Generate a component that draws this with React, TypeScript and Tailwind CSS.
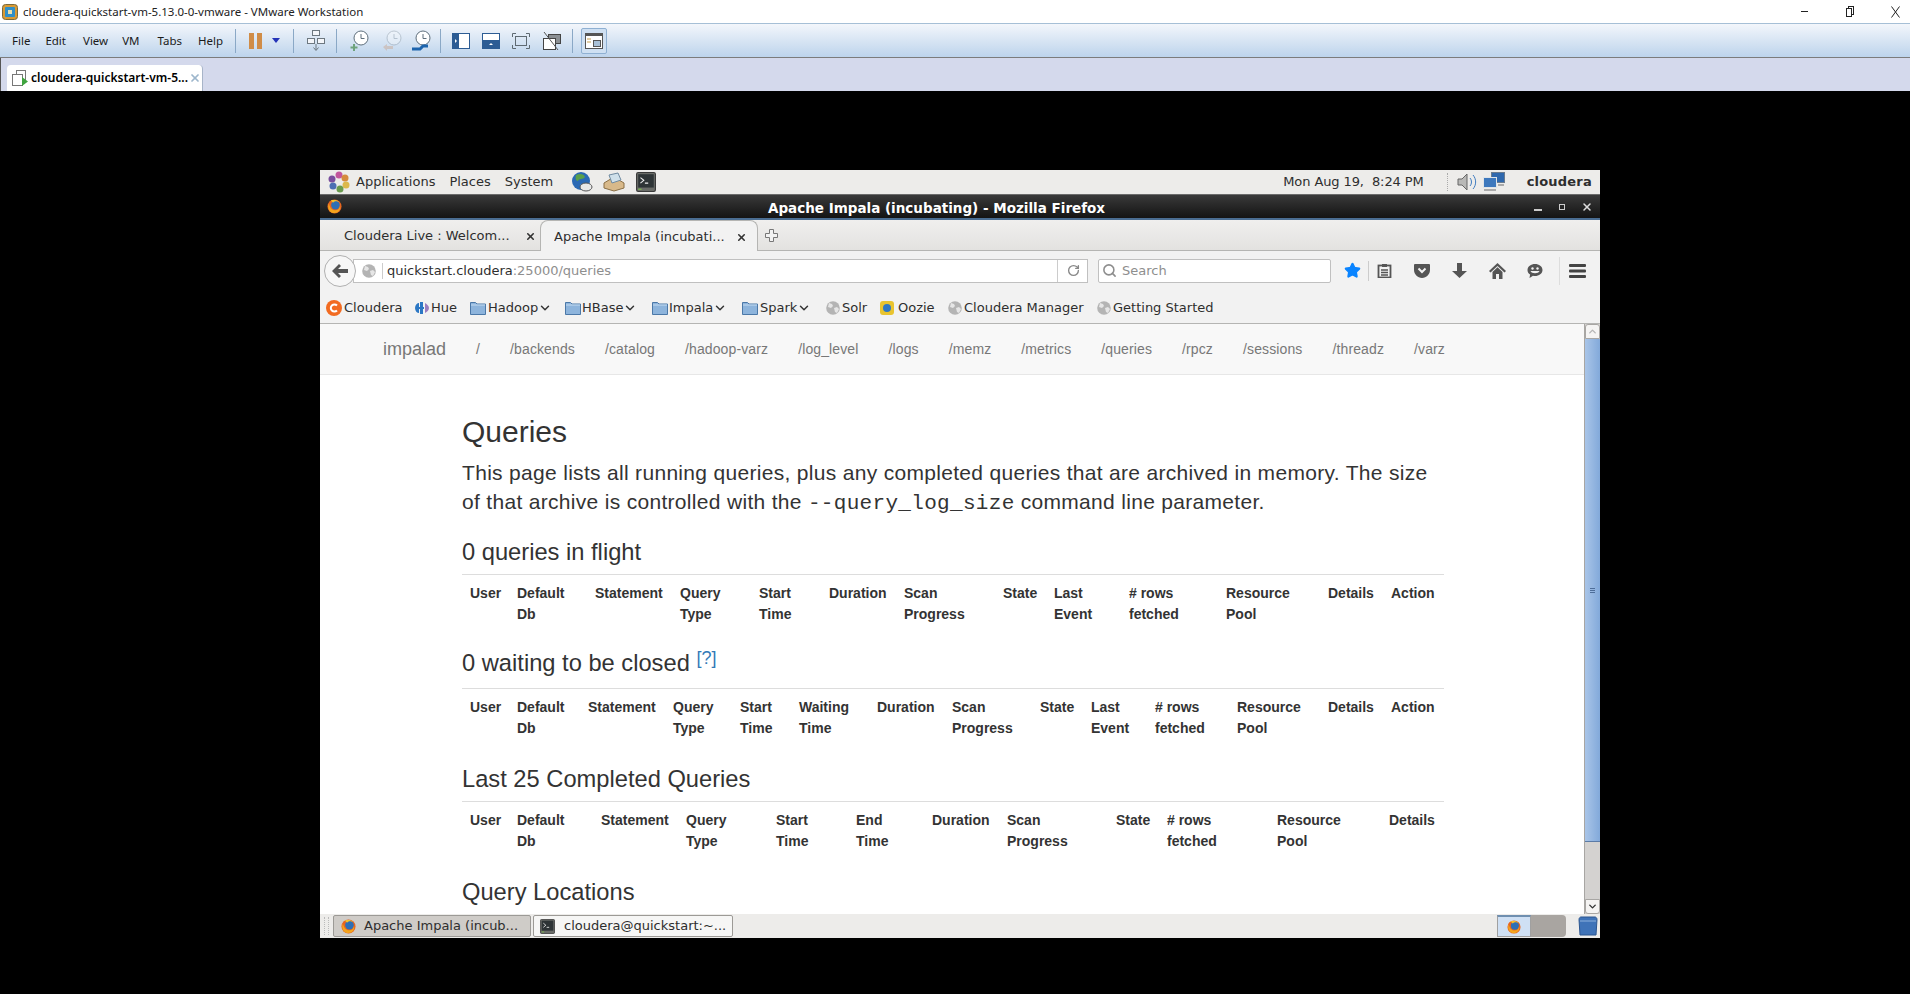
import React from 'react';
import { ChevronDown, ChevronUp, Search, RotateCw, X, Star } from 'lucide-react';

const Firefox = ({ size = 16 }: { size?: number }) => (
  <svg width={size} height={size} viewBox="0 0 16 16">
    <circle cx="8" cy="8" r="7.5" fill="#e8651f" />
    <circle cx="9" cy="6.5" r="4.6" fill="#2f6fb5" />
    <path d="M2 5c1 4 3 7 7 7 3 0 4.500-2 4.800-4.500C15 11 12 15 8 15 3.500 15 .5 11 1.500 6z" fill="#f3a51d" />
    <path d="M4 1.500C7 .5 11 1 13 3 10.500 2 8 2.300 6.500 4z" fill="#f6c02c" />
  </svg>
);

const Globe = () => (
  <svg width="16" height="16" viewBox="0 0 16 16" className="shrink-0">
    <circle cx="8" cy="8" r="6.800" fill="#b4b4b4" />
    <path d="M4 3l3 1 1 2-2 2-3-1zM9 8l3-1 2 2-2 4-2-1z" fill="#e6e6e6" />
  </svg>
);

const Folder = () => (
  <svg width="16" height="16" viewBox="0 0 16 16" className="shrink-0">
    <path d="M.5 2.500h5l1.500 1.500h8.500v10.500H.5z" fill="#8db4dc" stroke="#4b78a8" />
    <path d="M1 5h14" stroke="#c5dbf0" />
  </svg>
);

const Terminal = ({ size = 18 }: { size?: number }) => (
  <svg width={size} height={size} viewBox="0 0 18 18">
    <rect x=".5" y=".5" width="17" height="17" rx="1.500" fill="#6a6c68" stroke="#3a3a3a" />
    <rect x="2" y="2" width="14" height="12" fill="#2e3436" />
    <path d="M4 5l3 2.500L4 10M8 10h3" stroke="#eee" fill="none" />
    <path d="M2 15.500h3" stroke="#7ec34c" />
  </svg>
);

const Sep = ({ cls }: { cls: string }) => <div className={`w-px h-[24px] bg-[#8aa8c6] shrink-0 ${cls}`} />;

const ClockIcon = ({ badge, dim }: { badge: string; dim?: boolean }) => (
  <svg width="20" height="22" viewBox="0 0 20 22" className={`shrink-0 ${dim ? 'opacity-30' : ''}`}>
    <circle cx="12" cy="8" r="7" fill="#fff" stroke="#5f6f7c" />
    <path d="M12 4v4.500h3.500" stroke="#5f6f7c" fill="none" />
    {badge === 'plus' && <path d="M5 14v7M1.500 17.500h7" stroke="#6fa37c" strokeWidth="2" />}
    {badge === 'back' && <path d="M1 17l4-3v2h6v3H5v2z" fill="#c98a5e" />}
    {badge === 'wrench' && <path d="M1 19h8l3-3h5" stroke="#1d64ad" strokeWidth="3" fill="none" />}
  </svg>
);

const VmwareToolbar = () => (
  <div className="h-[35px] flex items-center text-[11.500px] text-[#1b1b1b] border-t border-[#a6bfd6] border-b border-b-[#7c7c7c] bg-gradient-to-b from-[#f3f6fb] to-[#bdd4ec]">
    <span className="ml-[12px]">File</span>
    <span className="ml-[15px]">Edit</span>
    <span className="ml-[17px]">View</span>
    <span className="ml-[14px]">VM</span>
    <span className="ml-[18px]">Tabs</span>
    <span className="ml-[16px]">Help</span>
    <Sep cls="ml-[12px]" />
    <div className="ml-[13px] w-[5px] h-[16px] bg-[#d08c47] shrink-0" />
    <div className="ml-[3px] w-[5px] h-[16px] bg-[#d08c47] shrink-0" />
    <svg width="8" height="5" viewBox="0 0 8 5" className="ml-[10px] shrink-0"><path d="M0 0h8L4 5z" fill="#2433b8" /></svg>
    <Sep cls="ml-[13px]" />
    <svg width="18" height="22" viewBox="0 0 18 22" className="ml-[13px] shrink-0">
      <g fill="#f4f6fa" stroke="#6d7880">
        <rect x="5.500" y=".5" width="7" height="5" />
        <rect x=".5" y="8.500" width="7" height="5" />
        <rect x="10.500" y="8.500" width="7" height="5" />
      </g>
      <path d="M9 14v6M6.500 17.500L9 20.500l2.500-3" stroke="#6d7880" fill="none" />
    </svg>
    <Sep cls="ml-[11px]" />
    <div className="ml-[12px]"><ClockIcon badge="plus" /></div>
    <div className="ml-[13px]"><ClockIcon badge="back" dim /></div>
    <div className="ml-[9px]"><ClockIcon badge="wrench" /></div>
    <Sep cls="ml-[9px]" />
    <svg width="18" height="16" viewBox="0 0 18 16" className="ml-[11px] shrink-0">
      <rect x=".5" y=".5" width="17" height="15" fill="#fff" stroke="#2c5c94" />
      <rect x="0" y="0" width="7" height="16" fill="#2c5c94" />
      <path d="M3 6l2 2-2 2z" fill="#fff" />
    </svg>
    <svg width="18" height="16" viewBox="0 0 18 16" className="ml-[12px] shrink-0">
      <rect x=".5" y=".5" width="17" height="15" fill="#fff" stroke="#2c5c94" />
      <rect x="0" y="7" width="18" height="9" fill="#2c5c94" />
      <path d="M7 12l2-2 2 2z" fill="#fff" />
    </svg>
    <svg width="18" height="16" viewBox="0 0 18 16" className="ml-[12px] shrink-0" fill="none" stroke="#5f6a72">
      <rect x="3.500" y="3.500" width="11" height="9" />
      <path d="M.5 4V.5H4M14 .5h3.500V4M.5 12v3.500H4M14 15.500h3.500V12" />
    </svg>
    <svg width="18" height="18" viewBox="0 0 18 18" className="ml-[13px] shrink-0">
      <rect x="5.500" y="2.500" width="12" height="9" fill="#8b8f93" stroke="#444" />
      <rect x=".5" y="6.500" width="12" height="11" fill="#fff" stroke="#444" />
      <path d="M1 0l14 18" stroke="#555" />
    </svg>
    <Sep cls="ml-[11px]" />
    <div className="ml-[8px] w-[26px] h-[26px] rounded-[2px] border border-[#8fb0d2] bg-[#cfe0f2] flex items-center justify-center shrink-0">
      <svg width="18" height="16" viewBox="0 0 18 16">
        <rect x=".5" y=".5" width="17" height="15" fill="#fff" stroke="#555" />
        <rect x="0" y="0" width="18" height="3" fill="#555" />
        <rect x="8.500" y="7.500" width="7" height="6" fill="#a9c0d6" stroke="#555" />
        <path d="M2 6h4M2 9h4" stroke="#c9a04e" />
      </svg>
    </div>
  </div>
);

const GnomePanel = () => (
  <div className="h-[25px] bg-[#edecea] flex items-center text-[13px] text-[#2e2e2e] border-b border-[#6b6b6b] font-['DejaVu_Sans',sans-serif]">
    <svg width="22" height="22" viewBox="0 0 22 22" className="ml-[8px] shrink-0">
      <circle cx="11" cy="4" r="3.500" fill="#c2569d" />
      <circle cx="17" cy="7" r="3.500" fill="#d58a3e" />
      <circle cx="18" cy="14" r="3.500" fill="#dcb84b" />
      <circle cx="12" cy="18" r="3.500" fill="#6a9b4e" />
      <circle cx="5" cy="15" r="3.500" fill="#4d6fb3" />
      <circle cx="4" cy="8" r="3.500" fill="#7a4f9e" />
      <circle cx="11" cy="11" r="2.500" fill="#edecea" />
    </svg>
    <span className="ml-[6px]">Applications</span>
    <span className="ml-[14px]">Places</span>
    <span className="ml-[14px]">System</span>
    <svg width="22" height="22" viewBox="0 0 22 22" className="ml-[18px] shrink-0">
      <circle cx="10" cy="10" r="9" fill="#2a69b4" />
      <path d="M5 4c4-2 8-1 9 2-2 3-6 1-7 4-2 0-3-3-2-6z" fill="#5aa04a" />
      <ellipse cx="15" cy="16" rx="6" ry="4" fill="#e8e8e8" stroke="#555" />
    </svg>
    <svg width="22" height="20" viewBox="0 0 22 20" className="ml-[10px] shrink-0">
      <path d="M1 11l10-6 10 6v5L11 19 1 16z" fill="#d8b98a" stroke="#8a6f45" />
      <path d="M6 3l9-2 3 7-9 3z" fill="#cfe0ea" stroke="#6f8aa0" />
    </svg>
    <div className="ml-[11px]"><Terminal size={20} /></div>
    <span className="ml-[627px] tracking-[-0.1px]">Mon Aug 19,&nbsp; 8:24 PM</span>
    <div className="ml-[23px] w-[3px] h-[18px] border-l border-dotted border-[#aaa] shrink-0" />
    <svg width="20" height="20" viewBox="0 0 20 20" className="ml-[7px] shrink-0">
      <path d="M1 7h4l5-5v16l-5-5H1z" fill="#b9b9b7" stroke="#666" />
      <path d="M13 6c2 2 2 6 0 8M16 3c3.500 4 3.500 10 0 14" stroke="#3f7cc0" fill="none" />
    </svg>
    <svg width="22" height="22" viewBox="0 0 22 22" className="ml-[6px] shrink-0">
      <rect x="8.500" y="1.500" width="13" height="10" fill="#2f68ad" stroke="#6b7c8f" />
      <rect x=".5" y="6.500" width="13" height="10" fill="#3d78bd" stroke="#dfe4e8" />
      <path d="M1 19h12" stroke="#aaa" strokeWidth="2" />
      <path d="M15 14h6" stroke="#aaa" strokeWidth="2" />
    </svg>
    <span className="ml-[22px] font-bold tracking-[0.2px]">cloudera</span>
  </div>
);

const FirefoxTitleBar = () => (
  <div className="h-[25px] bg-gradient-to-b from-[#3a3a3a] to-[#141414] border-b-2 border-[#4a6d92] flex items-center text-white font-['DejaVu_Sans',sans-serif]">
    <div className="ml-[7px] w-[16px] shrink-0"><Firefox size={15} /></div>
    <div className="flex-1 text-center text-[13.500px] font-bold pr-[4px] pt-[3px]">Apache Impala (incubating) - Mozilla Firefox</div>
    <div className="w-[8px] h-[2px] bg-[#ccc] mt-[7px] shrink-0" />
    <div className="ml-[17px] w-[6px] h-[6px] border border-[#ccc] shrink-0" />
    <X size={12} strokeWidth={3} className="ml-[16px] mr-[7px] text-[#ddd] shrink-0" />
  </div>
);

const FirefoxTabs = () => (
  <div className="h-[31px] flex items-end bg-gradient-to-b from-[#f0efee] to-[#e3e2e0] border-b border-[#b5b5b3] text-[13px] text-[#2e2e2e] font-['DejaVu_Sans',sans-serif]">
    <div className="w-[220px] h-[30px] flex items-center shrink-0 pt-[2px]">
      <span className="ml-[24px] w-[174px] truncate">Cloudera Live : Welcom...</span>
      <X size={11} strokeWidth={3.500} className="ml-[7px] text-[#333]" />
    </div>
    <div className="w-[218px] h-[31px] mb-[-1px] flex items-center bg-[#f2f2f2] border border-b-0 border-[#b5b5b3] rounded-t-[8px] shrink-0 pt-[2px]">
      <span className="ml-[13px] w-[174px] truncate">Apache Impala (incubati...</span>
      <X size={11} strokeWidth={3.500} className="ml-[8px] text-[#333]" />
    </div>
    <div className="h-[30px] flex items-center ml-[6px] pt-[1px]">
      <svg width="15" height="15" viewBox="0 0 15 15">
        <path d="M5.500 1.500h4v4h4v4h-4v4h-4v-4h-4v-4h4z" fill="#f2f2f2" stroke="#777" />
      </svg>
    </div>
  </div>
);

const FirefoxNavBar = () => (
  <div className="h-[41px] bg-[#f2f2f2] flex items-center pb-[2px] font-['DejaVu_Sans',sans-serif]">
    <div className="ml-[4px] w-[32px] h-[32px] rounded-full border border-[#b0b0b0] bg-[#f7f7f7] flex items-center justify-center shrink-0 z-10">
      <svg width="16" height="14" viewBox="0 0 16 14"><path d="M7 0l2 2-3 3h10v4H6l3 3-2 2-7-7z" fill="#555" /></svg>
    </div>
    <div className="ml-[-3px] w-[735px] h-[24px] bg-white border border-[#c0c0c0] flex items-center text-[13px] shrink-0">
      <div className="ml-[7px]"><Globe /></div>
      <div className="w-px h-[16px] bg-[#ccc] ml-[5px]" />
      <span className="ml-[4px] text-[#2e2e2e]">quickstart.cloudera</span>
      <span className="text-[#8e8e8e]">:25000/queries</span>
      <div className="flex-1" />
      <div className="w-px h-[22px] bg-[#ccc]" />
      <RotateCw size={13} strokeWidth={2.500} className="ml-[9px] mr-[7px] text-[#888]" />
    </div>
    <div className="ml-[10px] w-[233px] h-[24px] bg-white border border-[#c0c0c0] rounded-[2px] flex items-center text-[13px] text-[#8e8e8e] shrink-0">
      <Search size={15} strokeWidth={2.500} className="ml-[3px]" />
      <span className="ml-[5px]">Search</span>
    </div>
    <Star size={17} fill="#0a84ff" stroke="#0a84ff" className="ml-[13px] shrink-0" />
    <div className="w-px h-[20px] bg-[#ccc] ml-[7px] shrink-0" />
    <svg width="15" height="15" viewBox="0 0 15 15" className="ml-[8px] shrink-0">
      <rect x="1.500" y="2.500" width="12" height="12" fill="none" stroke="#555" strokeWidth="1.800" />
      <path d="M5 1h5v3H5z" fill="#555" />
      <path d="M4 7h7M4 9.500h7M4 12h7" stroke="#555" strokeWidth="1.300" />
    </svg>
    <svg width="16" height="14" viewBox="0 0 16 14" className="ml-[22px] shrink-0">
      <path d="M1 0h14a1 1 0 0 1 1 1v5c0 4-3.500 8-8 8S0 10 0 6V1a1 1 0 0 1 1-1z" fill="#555" />
      <path d="M4.500 4.500L8 8l3.500-3.500" stroke="#f2f2f2" strokeWidth="2" fill="none" />
    </svg>
    <svg width="15" height="15" viewBox="0 0 15 15" className="ml-[22px] shrink-0"><path d="M5 0h5v8h5l-7.500 7L0 8h5z" fill="#555" /></svg>
    <svg width="17" height="16" viewBox="0 0 17 16" className="ml-[22px] shrink-0">
      <path d="M8.500 0L17 8l-1.500 1.500-7-6.500-7 6.500L0 8z" fill="#555" />
      <path d="M3.500 9l5-4.700 5 4.700v7H10v-5H7v5H3.500z" fill="#555" />
    </svg>
    <svg width="16" height="16" viewBox="0 0 16 16" className="ml-[21px] shrink-0">
      <path d="M8 1c4 0 7.500 2.500 7.500 6S12 13 8 13c-.8 0-1.500 0-2-.2L2.500 15l.6-3.500C1.500 10.500.5 9 .5 7 .5 3.500 4 1 8 1z" fill="#555" />
      <circle cx="5.500" cy="5.500" r="1.200" fill="#f2f2f2" />
      <circle cx="10.500" cy="5.500" r="1.200" fill="#f2f2f2" />
      <path d="M3.500 8h9c-1 3-8 3-9 0z" fill="#f2f2f2" />
    </svg>
    <div className="w-px h-[28px] bg-[#ddd] ml-[16px] shrink-0" />
    <svg width="17" height="14" viewBox="0 0 17 14" className="ml-[9px] shrink-0">
      <rect width="17" height="3" rx="1" fill="#444" />
      <rect y="5.500" width="17" height="3" rx="1" fill="#444" />
      <rect y="11" width="17" height="3" rx="1" fill="#444" />
    </svg>
  </div>
);

const Chevron = () => <ChevronDown size={14} strokeWidth={2.500} className="shrink-0 text-[#333]" />;

const Bookmarks = () => (
  <div className="h-[32px] bg-[#f2f2f2] border-b border-[#b5b5b3] flex items-center text-[13px] text-[#2e2e2e] font-['DejaVu_Sans',sans-serif] pl-[6px]">
    <div className="w-[88px] flex items-center shrink-0">
      <svg width="16" height="16" viewBox="0 0 16 16" className="shrink-0"><circle cx="8" cy="8" r="8" fill="#f26b21" /><path d="M11 5.500a3.600 3.600 0 1 0 0 5" stroke="#fff" strokeWidth="2" fill="none" /></svg>
      <span className="ml-[2px]">Cloudera</span>
    </div>
    <div className="w-[56px] flex items-center shrink-0">
      <svg width="16" height="16" viewBox="0 0 16 16" className="shrink-0"><path d="M1 8c0-3 2-5 4-5v10c-2 0-4-2-4-5z" fill="#2c77c4" /><rect x="6" y="2" width="3" height="12" fill="#2c77c4" /><path d="M5 7h5v2H5z" fill="#2c77c4" /><path d="M11 3c2 1 4 3 4 5s-2 4-4 5z" fill="#9b7ec0" /></svg>
      <span className="ml-[1px]">Hue</span>
    </div>
    <div className="w-[95px] flex items-center shrink-0"><Folder /><span className="ml-[2px]">Hadoop</span><Chevron /></div>
    <div className="w-[87px] flex items-center shrink-0"><Folder /><span className="ml-[1px]">HBase</span><Chevron /></div>
    <div className="w-[90px] flex items-center shrink-0"><Folder /><span className="ml-[1px]">Impala</span><Chevron /></div>
    <div className="w-[83px] flex items-center shrink-0"><Folder /><span className="ml-[2px]">Spark</span><Chevron /></div>
    <div className="w-[54px] flex items-center shrink-0"><Globe /><span className="ml-[1px]">Solr</span></div>
    <div className="w-[68px] flex items-center shrink-0">
      <svg width="16" height="16" viewBox="0 0 16 16" className="shrink-0"><rect x="1" y="1" width="14" height="14" rx="3" fill="#e9c42f" /><circle cx="8" cy="8" r="4" fill="#2f78c4" /></svg>
      <span className="ml-[3px]">Oozie</span>
    </div>
    <div className="w-[149px] flex items-center shrink-0"><Globe /><span className="ml-[1px]">Cloudera Manager</span></div>
    <div className="flex items-center shrink-0"><Globe /><span className="ml-[1px]">Getting Started</span></div>
  </div>
);

const links = ['/', '/backends', '/catalog', '/hadoop-varz', '/log_level', '/logs', '/memz', '/metrics', '/queries', '/rpcz', '/sessions', '/threadz', '/varz'];

const PageNav = () => (
  <div className="h-[51px] bg-[#f8f8f8] border-b border-[#e7e7e7] flex items-center pl-[48px] text-[#777] shrink-0">
    <span className="px-[15px] text-[18px]">impalad</span>
    {links.map((l) => (
      <span key={l} className="px-[15px] text-[14px] tracking-[0.12px]">{l}</span>
    ))}
  </div>
);

interface Col { top: string; bottom?: string; w: string }

const inFlight: Col[] = [
  { top: 'User', w: 'w-[47px]' },
  { top: 'Default', bottom: 'Db', w: 'w-[78px]' },
  { top: 'Statement', w: 'w-[85px]' },
  { top: 'Query', bottom: 'Type', w: 'w-[79px]' },
  { top: 'Start', bottom: 'Time', w: 'w-[70px]' },
  { top: 'Duration', w: 'w-[75px]' },
  { top: 'Scan', bottom: 'Progress', w: 'w-[99px]' },
  { top: 'State', w: 'w-[51px]' },
  { top: 'Last', bottom: 'Event', w: 'w-[75px]' },
  { top: '# rows', bottom: 'fetched', w: 'w-[97px]' },
  { top: 'Resource', bottom: 'Pool', w: 'w-[102px]' },
  { top: 'Details', w: 'w-[63px]' },
  { top: 'Action', w: 'w-[61px]' },
];

const waiting: Col[] = [
  { top: 'User', w: 'w-[47px]' },
  { top: 'Default', bottom: 'Db', w: 'w-[71px]' },
  { top: 'Statement', w: 'w-[85px]' },
  { top: 'Query', bottom: 'Type', w: 'w-[67px]' },
  { top: 'Start', bottom: 'Time', w: 'w-[59px]' },
  { top: 'Waiting', bottom: 'Time', w: 'w-[78px]' },
  { top: 'Duration', w: 'w-[75px]' },
  { top: 'Scan', bottom: 'Progress', w: 'w-[88px]' },
  { top: 'State', w: 'w-[51px]' },
  { top: 'Last', bottom: 'Event', w: 'w-[64px]' },
  { top: '# rows', bottom: 'fetched', w: 'w-[82px]' },
  { top: 'Resource', bottom: 'Pool', w: 'w-[91px]' },
  { top: 'Details', w: 'w-[63px]' },
  { top: 'Action', w: 'w-[61px]' },
];

const completed: Col[] = [
  { top: 'User', w: 'w-[47px]' },
  { top: 'Default', bottom: 'Db', w: 'w-[84px]' },
  { top: 'Statement', w: 'w-[85px]' },
  { top: 'Query', bottom: 'Type', w: 'w-[90px]' },
  { top: 'Start', bottom: 'Time', w: 'w-[80px]' },
  { top: 'End', bottom: 'Time', w: 'w-[76px]' },
  { top: 'Duration', w: 'w-[75px]' },
  { top: 'Scan', bottom: 'Progress', w: 'w-[109px]' },
  { top: 'State', w: 'w-[51px]' },
  { top: '# rows', bottom: 'fetched', w: 'w-[110px]' },
  { top: 'Resource', bottom: 'Pool', w: 'w-[112px]' },
  { top: 'Details', w: 'w-[63px]' },
];

const HeaderTable = ({ cols }: { cols: Col[] }) => (
  <table className="w-[982px] table-fixed border-collapse">
    <thead>
      <tr className="border-t border-[#ddd]">
        {cols.map((c) => (
          <th key={c.top} className={`${c.w} px-[8px] pt-[8px] pb-[6px] text-left align-top text-[14px] leading-[21px] font-bold`}>
            {c.top}
            {c.bottom && <br />}
            {c.bottom}
          </th>
        ))}
      </tr>
    </thead>
  </table>
);

const Scrollbar = () => (
  <div className="w-[16px] shrink-0 flex flex-col bg-[#d4d2d0] border-l border-[#a8a6a3]">
    <div className="h-[15px] bg-[#f5f4f3] border border-[#a8a6a3] rounded-t-[3px] flex items-center justify-center">
      <ChevronUp size={11} strokeWidth={3} className="text-[#b5b5b5]" />
    </div>
    <div className="h-[503px] bg-gradient-to-r from-[#a9c5e8] to-[#82a9da] border-b border-[#5b7ba6] flex flex-col items-center justify-center gap-[1px]">
      <div className="w-[5px] h-px bg-[#4d6d99]" />
      <div className="w-[5px] h-px bg-[#4d6d99]" />
      <div className="w-[5px] h-px bg-[#4d6d99]" />
    </div>
    <div className="flex-1" />
    <div className="h-[15px] bg-[#f5f4f3] border border-[#a8a6a3] rounded-b-[3px] flex items-center justify-center">
      <ChevronDown size={11} strokeWidth={3} className="text-[#333]" />
    </div>
  </div>
);

const PageContent = () => (
  <div className="flex-1 flex min-h-0 bg-white overflow-hidden">
    <div className="flex-1 min-w-0 flex flex-col overflow-hidden font-['Liberation_Sans',Arial,sans-serif] text-[#333]">
      <PageNav />
      <div className="pl-[142px] w-[1124px]">
        <h1 className="mt-[40px] text-[30px] leading-[33px] font-medium">Queries</h1>
        <p className="mt-[10px] text-[21px] leading-[29.400px] font-light w-[982px] tracking-[0.31px]">
          This page lists all running queries, plus any completed queries that are archived in memory. The size of that archive is controlled with the{' '}
          <code className="font-['Liberation_Mono',monospace] text-[21px]">--query_log_size</code> command line parameter.
        </p>
        <h3 className="mt-[20px] mb-[9px] text-[23.700px] leading-[26px] font-medium">0 queries in flight</h3>
        <HeaderTable cols={inFlight} />
        <h3 className="mt-[19px] mb-[12px] text-[23.700px] leading-[26px] font-medium">
          0 waiting to be closed <sup className="text-[18px] leading-[0] text-[#337ab7] align-baseline top-[-7px]">[?]</sup>
        </h3>
        <HeaderTable cols={waiting} />
        <h3 className="mt-[21px] mb-[9px] text-[23.700px] leading-[26px] font-medium">Last 25 Completed Queries</h3>
        <HeaderTable cols={completed} />
        <h3 className="mt-[21px] text-[23.700px] leading-[26px] font-medium">Query Locations</h3>
      </div>
    </div>
    <Scrollbar />
  </div>
);

const Taskbar = () => (
  <div className="h-[24px] bg-[#edecea] flex items-center text-[13px] text-[#2e2e2e] font-['DejaVu_Sans',sans-serif]">
    <div className="ml-[4px] w-[5px] h-[18px] border-x border-dotted border-[#bbb] shrink-0" />
    <div className="ml-[4px] w-[198px] h-[22px] bg-[#cfccc8] border border-[#9c9a96] rounded-[2px] flex items-center shrink-0">
      <div className="ml-[7px]"><Firefox size={15} /></div>
      <span className="ml-[8px]">Apache Impala (incub...</span>
    </div>
    <div className="ml-[2px] w-[200px] h-[22px] bg-[#f6f6f5] border border-[#9c9a96] rounded-[2px] flex items-center shrink-0">
      <div className="ml-[6px]"><Terminal size={15} /></div>
      <span className="ml-[9px]">cloudera@quickstart:~...</span>
    </div>
    <div className="ml-[764px] w-[34px] h-[22px] bg-[#cfe0f4] border border-[#a0a0a0] border-t-2 border-t-[#6f8fb0] flex items-center justify-center shrink-0"><Firefox size={14} /></div>
    <div className="w-[35px] h-[22px] bg-[#a9a5a1] rounded-r-[4px] shrink-0" />
    <svg width="20" height="20" viewBox="0 0 20 20" className="ml-[12px] shrink-0">
      <path d="M1 3.500C1 2 2 1 3 1h14c1 0 2 1 2 2.500L18 19H2z" fill="#3f73b8" stroke="#2c5690" />
      <path d="M2 5h16" stroke="#8eb2dd" />
    </svg>
  </div>
);

export default function App() {
  return (
    <div className="w-[1910px] h-[994px] bg-black overflow-hidden flex flex-col font-['Noto_Sans',sans-serif]">
      <div className="h-[23px] bg-white flex items-center text-[11.500px] text-[#222] shrink-0">
        <svg width="16" height="16" viewBox="0 0 16 16" className="ml-[2px] shrink-0">
          <rect x=".5" y=".5" width="15" height="15" rx="3" fill="#d99a34" stroke="#7d6a3a" />
          <rect x="3" y="3" width="10" height="10" rx="1" fill="#2f8fc8" />
          <rect x="6" y="6" width="4" height="4" fill="#e8e0b0" />
        </svg>
        <span className="ml-[5px]">cloudera-quickstart-vm-5.13.0-0-vmware - VMware Workstation</span>
        <div className="flex-1" />
        <div className="w-[7px] h-px bg-[#222]" />
        <svg width="8" height="11" viewBox="0 0 8 11" className="ml-[38px]" fill="#fff" stroke="#222">
          <rect x="2.500" y=".5" width="5" height="8" />
          <rect x=".5" y="2.500" width="5" height="8" />
        </svg>
        <svg width="9" height="12" viewBox="0 0 9 12" className="ml-[37px] mr-[10px]" stroke="#222">
          <path d="M.5.5l8 11M8.500.5l-8 11" />
        </svg>
      </div>
      <VmwareToolbar />
      <div className="h-[33px] bg-[#d4d9ec] flex items-end pl-[6px] shrink-0 border-l border-[#555]">
        <div className="w-[196px] h-[26px] bg-white rounded-t-[4px] border-r border-[#a7b4c8] flex items-center text-[12px] font-semibold text-black">
          <svg width="16" height="16" viewBox="0 0 16 16" className="ml-[5px] shrink-0">
            <rect x="4.500" y=".5" width="9" height="10" fill="#fff" stroke="#777" />
            <rect x=".5" y="4.500" width="10" height="11" fill="#fff" stroke="#777" />
            <path d="M10 7l6 4.500-6 4.500z" fill="#3fa43f" />
          </svg>
          <span className="ml-[3px]">cloudera-quickstart-vm-5...</span>
          <X size={12} strokeWidth={3.500} className="ml-[1px] text-[#9db6cc]" />
        </div>
      </div>
      <div className="h-[79px] shrink-0" />
      <div className="ml-[320px] w-[1280px] h-[768px] flex flex-col shrink-0 overflow-hidden">
        <GnomePanel />
        <FirefoxTitleBar />
        <FirefoxTabs />
        <FirefoxNavBar />
        <Bookmarks />
        <PageContent />
        <Taskbar />
      </div>
    </div>
  );
}
